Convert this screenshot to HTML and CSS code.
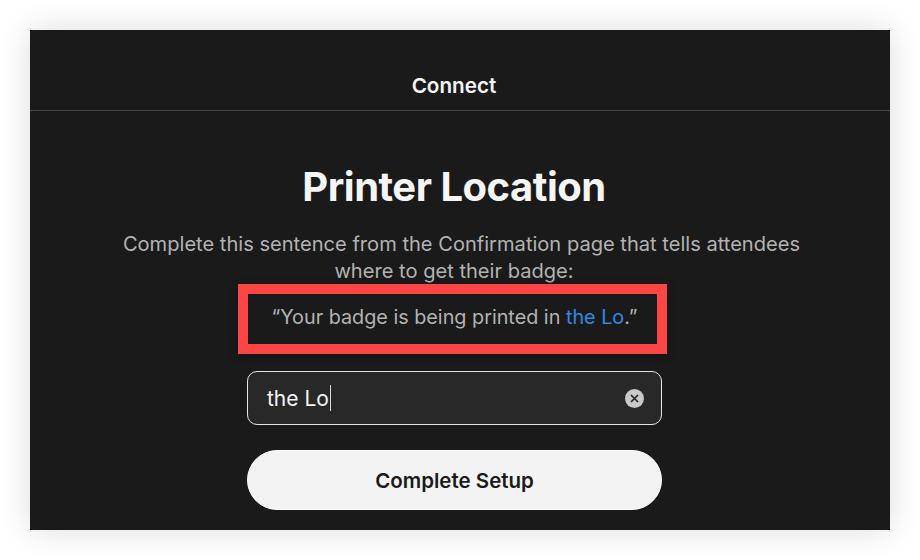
FILE: index.html
```html
<!DOCTYPE html>
<html lang="en">
<head>
    <meta charset="UTF-8">
    <title>Printer Location</title>
    <link rel="stylesheet" href="styles.css">
</head>
<body>
    <div class="screen">
        <div class="top-bar">Connect</div>
        <div class="content">
            <h1>Printer Location</h1>
            <p class="intro">Complete this sentence from the Confirmation page that tells attendees where to get their badge:</p>
            <p class="quote">“Your badge is being printed in <span class="typed">the Lo</span>.”</p>
            <div class="field">
                <span class="field-text">the Lo</span><span class="caret"></span>
                <svg class="clear-icon" width="19" height="19" viewBox="0 0 19 19">
                    <circle cx="9.5" cy="9.5" r="9.5" fill="#c8c8c8"/>
                    <path d="M6 6l7 7M13 6l-7 7" stroke="#262626" stroke-width="1.7" fill="none"/>
                </svg>
            </div>
            <button class="setup-btn">Complete Setup</button>
        </div>
    </div>
</body>
</html>
```

FILE: styles.css
```css
html, body {
    height: 100%;
}
body {
    margin: 0;
    padding: 30px;
    box-sizing: border-box;
    background: #fff;
    font-family: Inter, "Liberation Sans", sans-serif;
    overflow: hidden;
}
.screen {
    width: 860px;
    height: 500px;
    background: #1a1a1a;
    box-shadow: 0 0 30px rgba(0, 0, 0, 0.14);
    display: flex;
    flex-direction: column;
}
.top-bar {
    height: 81px;
    box-sizing: border-box;
    padding: 44px 12px 0 0;
    border-bottom: 1px solid #444;
    color: #f5f5f5;
    font-size: 20.7px;
    font-weight: 600;
    line-height: 24px;
    text-align: center;
}
.content {
    display: flex;
    flex-direction: column;
    align-items: center;
    padding-right: 12px;
}
h1 {
    margin: 51px 0 0;
    color: #f5f5f5;
    font-size: 40px;
    font-weight: 700;
    line-height: 50px;
    letter-spacing: -0.5px;
}
.intro {
    width: 700px;
    margin: 19px 0 0;
    color: #b3b3b3;
    font-size: 20.1px;
    line-height: 27px;
    text-align: center;
    text-indent: 15px;
}
.quote {
    width: 429px;
    height: 70px;
    box-sizing: border-box;
    margin: -1px 3px 0 0;
    padding-left: 4px;
    border: 10px solid #fc4545;
    box-shadow: 0 2px 8px rgba(0, 0, 0, 0.4);
    color: #b3b3b3;
    font-size: 19.8px;
    line-height: 46px;
    text-align: center;
}
.typed {
    color: #2f8ae6;
}
.field {
    width: 415px;
    height: 54px;
    box-sizing: border-box;
    margin: 17px 0 0 1px;
    padding: 0 17px 0 19px;
    display: flex;
    align-items: center;
    background: #282828;
    border: 1px solid #e6e6e6;
    border-radius: 10px;
    color: #f5f5f5;
    font-size: 21px;
}
.caret {
    width: 1px;
    height: 26px;
    margin-left: 1px;
    background: #d8d8d8;
}
.clear-icon {
    margin-left: auto;
}
.setup-btn {
    width: 415px;
    height: 60px;
    margin: 25px 0 0 1px;
    background: #f3f3f3;
    color: #1a1a1a;
    border: 1px solid #fff;
    border-radius: 30px;
    font-family: inherit;
    font-size: 20.5px;
    font-weight: 600;
}
```
